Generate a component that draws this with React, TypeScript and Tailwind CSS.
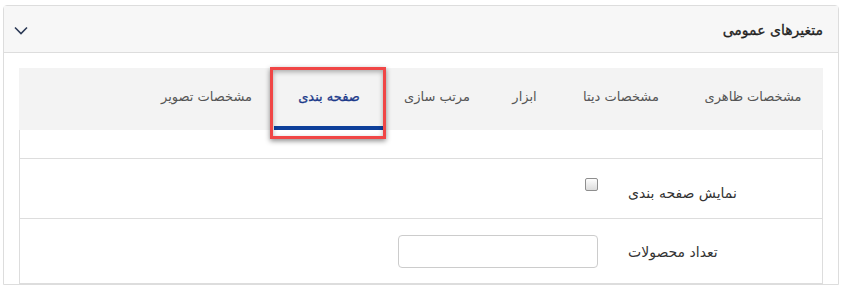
const tabs = [
  { label: 'مشخصات ظاهری', w: 'w-[140px]' },
  { label: 'مشخصات دیتا', w: 'w-[124px]' },
  { label: 'ابزار', w: 'w-[69px]' },
  { label: 'مرتب سازی', w: 'w-[106px]' },
  { label: 'صفحه بندی', w: 'w-[110px]', active: true },
  { label: 'مشخصات تصویر', w: 'w-[135px]' },
];

const App = () => {
  return (
    <div className="relative w-[842px] h-[286px] overflow-hidden bg-white pt-[5px] px-[3px] font-['DejaVu_Sans',sans-serif] text-[13px] text-[#333]">
      {/* Panel */}
      <div className="rounded-t-[4px] border border-[#dddddd]">
        {/* Header */}
        <div dir="rtl" className="flex h-[47px] items-center justify-between border-b border-[#dddddd] bg-[#f7f7f7] pr-[15px] pl-[10px]">
          <span className="pt-[2px] text-[14px] text-[#222] [-webkit-text-stroke:0.3px_#222]">متغیرهای عمومی</span>
          <svg width="14" height="9" viewBox="0 0 14 9" className="mt-[2px]">
            <polyline points="1,1.5 7,7.5 13,1.5" fill="none" stroke="#2c3a56" strokeWidth="1.6" />
          </svg>
        </div>

        {/* Body */}
        <div className="px-[15px] pt-[15px]">
          <div dir="rtl" className="flex h-[62px] bg-[#f3f3f3]">
            {tabs.map((tab, i) => (
              <div
                key={i}
                className={`flex shrink-0 items-center justify-center ${tab.w} ${
                  tab.active
                    ? 'border-b-4 border-[#0d3f9a] text-[#1c3a8a] [-webkit-text-stroke:0.3px_#1c3a8a]'
                    : 'pb-[4px] text-[#555]'
                }`}
              >
                {tab.label}
              </div>
            ))}
          </div>

          <div dir="rtl" className="border-x border-b border-[#dddddd] text-[14px]">
            <div className="h-[29px] border-b border-[#dddddd]" />
            <div className="flex h-[60px] border-b border-[#dddddd]">
              <div className="w-[209px] pl-[15px] pt-[24px] text-left leading-[20px]">نمایش صفحه بندی</div>
              <div className="pr-[15px] pt-[19px]">
                <div className="h-[13px] w-[13px] rounded-[2px] border border-[#8e8e8e] bg-gradient-to-b from-[#fdfdfd] to-[#dcdcdc]" />
              </div>
            </div>
            <div className="flex h-[64px] items-center">
              <div className="w-[209px] pl-[15px] pt-[2px] text-left leading-[20px]">تعداد محصولات</div>
              <div className="pr-[15px]">
                <input type="text" className="h-[33px] w-[200px] rounded-[4px] border border-[#cccccc] bg-white outline-none" />
              </div>
            </div>
          </div>
        </div>
      </div>

      {/* Highlight annotation */}
      <div className="pointer-events-none absolute left-[270px] top-[67px] h-[72px] w-[116px] border-[3px] border-[#f04646] shadow-[0_2px_5px_rgba(0,0,0,0.45),inset_0_2px_5px_rgba(0,0,0,0.3)]" />
    </div>
  );
};

export default App;
